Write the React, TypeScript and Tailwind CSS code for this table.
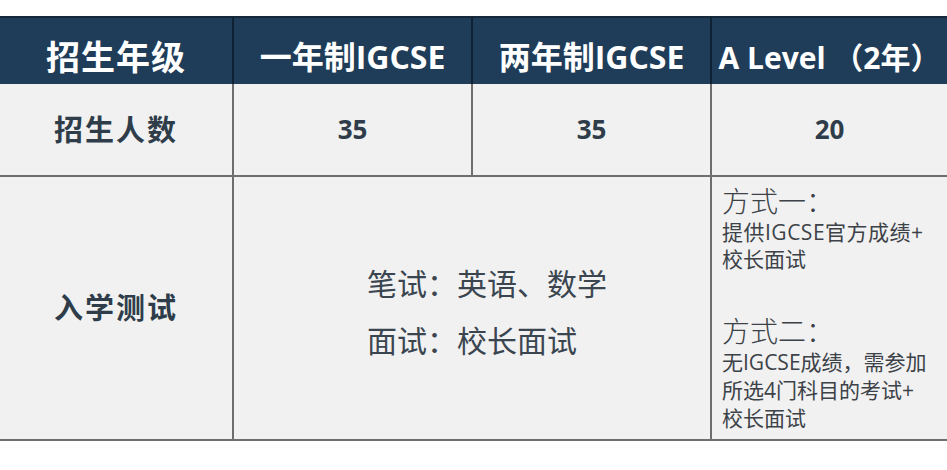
import React from 'react';

const font = { fontFamily: '"Open Sans", "Noto Sans CJK SC", sans-serif' };

const App = () => {
  return (
    <div className="w-[947px] h-[470px] bg-white overflow-hidden pt-[16px]" style={font}>
      <div className="grid grid-cols-[234px_239px_239px_1fr] grid-rows-[68px_93px_262px] border-b-2 border-[#6e6e6e] bg-[#f1f1f1]">
        {/* Header */}
        <div className="bg-[#1f3d58] border-t-2 border-[#16293b] border-r-2 border-r-[#0f2233] flex items-center justify-center pt-[12px] text-white font-bold text-[34px] tracking-[1px]">
          招生年级
        </div>
        <div className="bg-[#1f3d58] border-t-2 border-[#16293b] border-r-2 border-r-[#0f2233] flex items-center justify-center pt-[12px] text-white font-bold text-[32px] whitespace-nowrap">
          一年制IGCSE
        </div>
        <div className="bg-[#1f3d58] border-t-2 border-[#16293b] border-r-2 border-r-[#0f2233] flex items-center justify-center pt-[12px] text-white font-bold text-[32px] whitespace-nowrap">
          两年制IGCSE
        </div>
        <div className="bg-[#1f3d58] border-t-2 border-[#16293b] flex items-center justify-center pt-[12px] text-white font-bold text-[30px] whitespace-nowrap">
          A Level （2年）
        </div>

        {/* 招生人数 */}
        <div className="border-r-2 border-b-2 border-[#6e6e6e] flex items-center justify-center text-[#2f3d4a] font-bold text-[29px] tracking-[2px]">
          招生人数
        </div>
        <div className="border-r-2 border-b-2 border-[#6e6e6e] flex items-center justify-center text-[#2f3d4a] font-bold text-[26px]">
          35
        </div>
        <div className="border-r-2 border-b-2 border-[#6e6e6e] flex items-center justify-center text-[#2f3d4a] font-bold text-[26px]">
          35
        </div>
        <div className="border-b-2 border-[#6e6e6e] flex items-center justify-center text-[#2f3d4a] font-bold text-[26px]">
          20
        </div>

        {/* 入学测试 */}
        <div className="border-r-2 border-[#6e6e6e] flex items-center justify-center text-[#2f3d4a] font-bold text-[29px] tracking-[2px]">
          入学测试
        </div>
        <div className="col-span-2 border-r-2 border-[#6e6e6e] flex items-center justify-center pl-[30px] pt-[8px]">
          <div className="text-[#3a4550] text-[30px] leading-[57px]">
            <p>笔试：英语、数学</p>
            <p>面试：校长面试</p>
          </div>
        </div>
        <div className="pl-[10px] pt-[6px] text-[#3c4248] whitespace-nowrap">
          <p className="text-[28px] leading-[36px] font-light">方式一：</p>
          <p className="text-[21px] leading-[27px] tracking-[0.5px]">提供IGCSE官方成绩+</p>
          <p className="text-[21px] leading-[27px]">校长面试</p>
          <p className="text-[28px] leading-[36px] font-light mt-[40px]">方式二：</p>
          <p className="text-[21px] leading-[27px]">无IGCSE成绩，需参加</p>
          <p className="text-[21px] leading-[28px]">所选4门科目的考试+</p>
          <p className="text-[21px] leading-[28px]">校长面试</p>
        </div>
      </div>
    </div>
  );
};

export default App;
